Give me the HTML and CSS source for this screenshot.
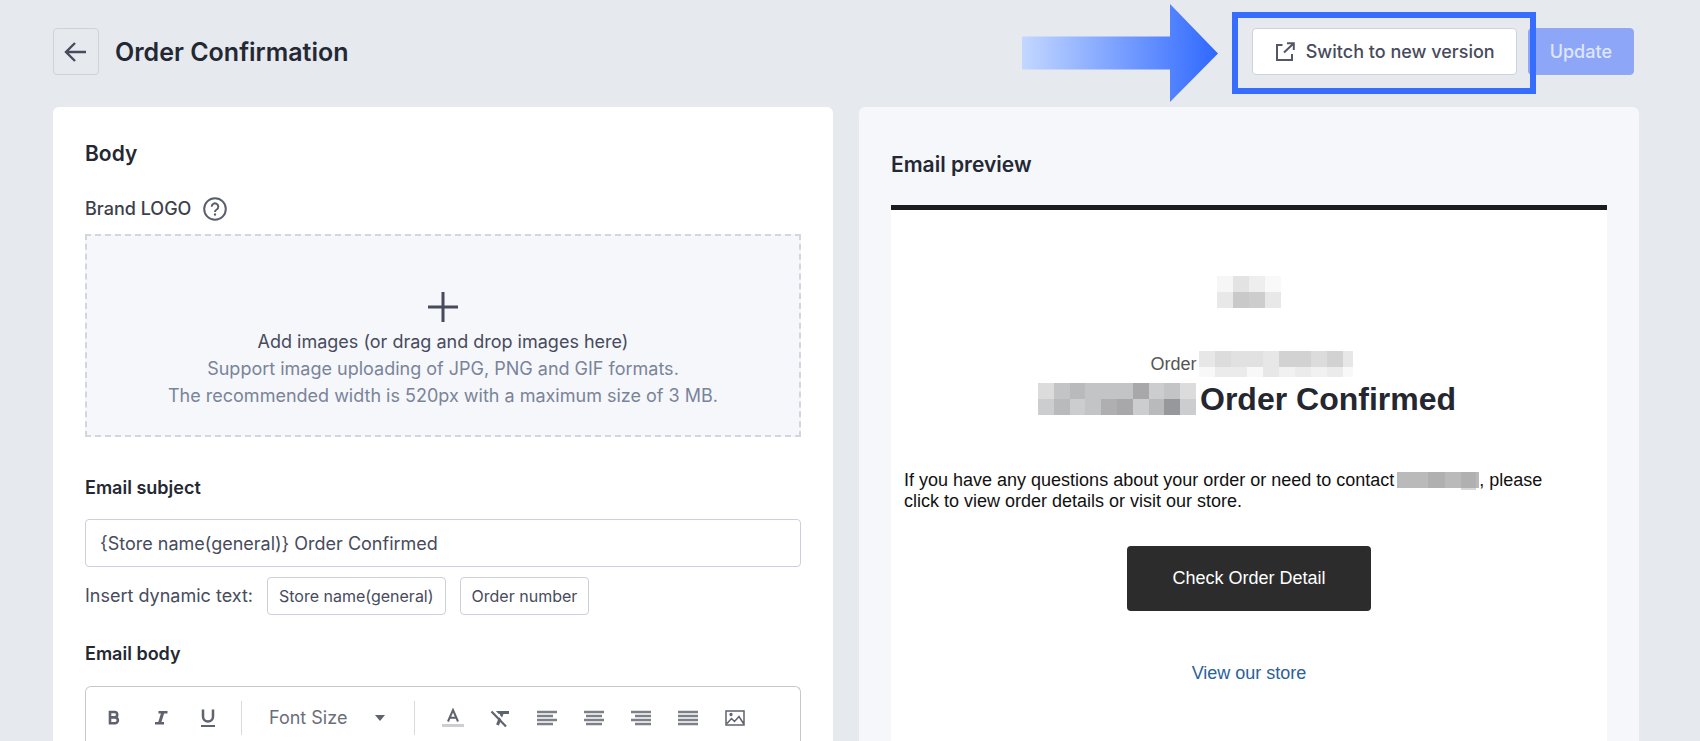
FILE: index.html
```html
<!DOCTYPE html>
<html lang="en">
<head>
<meta charset="utf-8">
<title>Order Confirmation</title>
<link rel="stylesheet" href="styles.css">
</head>
<body>
<header class="topbar">
  <button class="back" type="button" aria-label="Back">
    <svg width="24" height="24" viewBox="0 0 24 24" fill="none" stroke="#474b5c" stroke-width="2.400"><path d="M22 12H2M11 3L2 12l9 9"/></svg>
  </button>
  <h1 class="page-title">Order Confirmation</h1>
  <div class="switch-wrap">
    <svg class="callout-arrow" width="196" height="98" viewBox="0 0 196 98">
      <defs><linearGradient id="arrow-fill"><stop offset="0" stop-color="#c3d7ff"/><stop offset="1" stop-color="#2f68ff"/></linearGradient></defs>
      <path d="M0 32.500H148V0L196 49.500L148 98V65.500H0z" fill="url(#arrow-fill)"/>
    </svg>
    <button class="btn switch" type="button">
      <svg width="22" height="22" viewBox="0 0 22 22" fill="none" stroke="#545866" stroke-width="2"><path d="M8.500 4H3v15h15v-6M10 11.500L19.500 2.500M13 2.200h6.800V9"/></svg>
      Switch to new version
    </button>
    <span class="callout-box"></span>
  </div>
  <button class="btn update" type="button" disabled>Update</button>
</header>
<main class="columns">
  <section class="card editor">
    <h2 class="card-title">Body</h2>
    <div class="logo-label">Brand LOGO
      <svg width="24" height="24" viewBox="0 0 24 24" fill="none" stroke="#5b5f6d" stroke-width="2"><circle cx="12" cy="12" r="10.800"/><path d="M8.700 9.700a3.300 3.300 0 1 1 5 2.800c-1.200.7-1.700 1.200-1.700 2.300v.2"/><circle cx="12" cy="17.500" r=".6" stroke-width="1.200"/></svg>
    </div>
    <button class="dropzone" type="button">
      <svg width="30" height="30" viewBox="0 0 30 30" stroke="#474b5c" stroke-width="3"><path d="M15 0v30M0 15h30"/></svg>
      <span class="drop-main">Add images (or drag and drop images here)</span>
      <span class="drop-hint">Support image uploading of JPG, PNG and GIF formats.</span>
      <span class="drop-hint">The recommended width is 520px with a maximum size of 3 MB.</span>
    </button>
    <label class="field-label" for="subject">Email subject</label>
    <input class="subject" id="subject" type="text" value="{Store name(general)} Order Confirmed">
    <div class="dynamic">
      <span>Insert dynamic text:</span>
      <button class="chip" type="button">Store name(general)</button>
      <button class="chip" type="button">Order number</button>
    </div>
    <h3 class="field-label body-label">Email body</h3>
    <div class="rich">
      <div class="tools">
        <button class="tool" type="button" aria-label="Bold"><svg width="20" height="20" viewBox="0 0 20 20" fill="none" stroke="#5f636e" stroke-width="2.600"><path d="M6 4h4.500a2.700 2.700 0 0 1 0 5.400H6zM6 9.400h5a2.900 2.900 0 0 1 0 5.800H6z"/></svg></button>
        <button class="tool" type="button" aria-label="Italic"><svg width="20" height="20" viewBox="0 0 20 20" fill="none" stroke="#5f636e"><path stroke-width="2.500" d="M7.500 4.200h9M4 15.200h9"/><path stroke-width="3" d="M12 4l-3.500 11"/></svg></button>
        <button class="tool" type="button" aria-label="Underline"><svg width="20" height="20" viewBox="0 0 20 20" fill="none" stroke="#5f636e"><path stroke-width="2.500" d="M5 1.500v7a5 5 0 0 0 10 0v-7"/><path stroke-width="2" d="M3 18h14"/></svg></button>
        <span class="sep"></span>
        <button class="size" type="button">Font Size <svg width="10" height="6" viewBox="0 0 10 6" fill="#5f636e"><path d="M0 0h10L5 6z"/></svg></button>
        <span class="sep"></span>
        <button class="tool" type="button" aria-label="Text color"><svg width="22" height="20" viewBox="0 0 22 20" fill="none"><path stroke="#5f636e" stroke-width="2" d="M6 13.500L11 2l5 11.500M7.800 9.800h6.400"/><path stroke="#cdced1" stroke-width="3" d="M0 17.500h22"/></svg></button>
        <button class="tool" type="button" aria-label="Clear formatting"><svg width="20" height="20" viewBox="0 0 20 20" fill="none" stroke="#5f636e"><path stroke-width="3" d="M6 4.500h13M12.500 4.500L7.500 17"/><path stroke="#fff" stroke-width="2" d="M3 1.500l14.500 15"/><path stroke-width="2.200" d="M1.500 3.500l14.500 15"/></svg></button>
        <button class="tool" type="button" aria-label="Align left"><svg width="20" height="20" viewBox="0 0 20 20" stroke="#7d8089" stroke-width="2.500"><path d="M0 4h20M0 8h16M0 12h20M0 16h16"/></svg></button>
        <button class="tool" type="button" aria-label="Align center"><svg width="20" height="20" viewBox="0 0 20 20" stroke="#7d8089" stroke-width="2.500"><path d="M0 4h20M2 8h16M0 12h20M2 16h16"/></svg></button>
        <button class="tool" type="button" aria-label="Align right"><svg width="20" height="20" viewBox="0 0 20 20" stroke="#7d8089" stroke-width="2.500"><path d="M0 4h20M4 8h16M0 12h20M4 16h16"/></svg></button>
        <button class="tool" type="button" aria-label="Justify"><svg width="20" height="20" viewBox="0 0 20 20" stroke="#7d8089" stroke-width="2.500"><path d="M0 4h20M0 8h20M0 12h20M0 16h20"/></svg></button>
        <button class="tool" type="button" aria-label="Insert image"><svg width="20" height="20" viewBox="0 0 20 20" fill="none" stroke="#5f636e" stroke-width="1.500"><path d="M1 3h18v14H1zM2 15.500l4.500-5 3 3L14 8.500l4.500 7"/><circle cx="6" cy="6.500" r=".9"/></svg></button>
      </div>
    </div>
  </section>
  <section class="card preview">
    <h2 class="card-title">Email preview</h2>
    <article class="mail">
      <svg class="mail-logo" width="64" height="32" viewBox="0 0 4 2" shape-rendering="crispEdges"><path fill="#f6f6f6" d="M0 0h1v1H0z"/><path fill="#e3e3e3" d="M1 0h1v1H1z"/><path fill="#eee" d="M2 0h1v1H2z"/><path fill="#f9f9f9" d="M3 0h1v1H3z"/><path fill="#e8e8e8" d="M0 1h1v1H0zM3 1h1v1H3z"/><path fill="#c9c9c9" d="M1 1h1v1H1z"/><path fill="#cdcdcd" d="M2 1h1v1H2z"/></svg>
      <p class="order-no">Order
        <svg width="154" height="26" viewBox="0 0 154 26" shape-rendering="crispEdges"><path fill="#e7e7e7" d="M0 0h16v16H0zM64 0h16v16H64zM64 16h16v10H64zM144 0h10v16h-10z"/><path fill="#dcdcdc" d="M16 0h16v16H16zM112 0h16v16h-16z"/><path fill="#e1e1e1" d="M32 0h32v16H32z"/><path fill="#d2d2d2" d="M80 0h32v16H80zM128 0h16v16h-16z"/><path fill="#f8f8f8" d="M0 16h16v10H0zM48 16h16v10H48zM144 16h10v10h-10z"/><path fill="#ebebeb" d="M16 16h32v10H16zM96 16h16v10H96zM128 16h16v10h-16z"/><path fill="#f1f1f1" d="M80 16h16v10H80zM112 16h16v10h-16z"/></svg>
      </p>
      <h2 class="mail-title">
        <svg width="158" height="32" viewBox="0 0 10 2" preserveAspectRatio="none" shape-rendering="crispEdges"><path fill="#dcdcdd" d="M0 0h1v1H0zM9 0h1v1H9z"/><path fill="#c3c4c6" d="M1 0h1v1H1zM3 0h3v1H3zM8 0h1v1H8zM3 1h1v1H3z"/><path fill="#b9babc" d="M2 0h1v1H2zM1 1h1v1H1zM7 1h1v1H7z"/><path fill="#a8a8aa" d="M6 0h1v1H6zM5 1h1v1H5z"/><path fill="#cccdcf" d="M7 0h1v1H7zM0 1h1v1H0zM2 1h1v1H2zM6 1h1v1H6zM9 1h1v1H9z"/><path fill="#afafb1" d="M4 1h1v1H4z"/><path fill="#97989c" d="M8 1h1v1H8z"/></svg>
        Order Confirmed
      </h2>
      <p class="mail-text">If you have any questions about your order or need to contact <svg width="82" height="18" viewBox="0 0 82 18" shape-rendering="crispEdges"><path fill="#bababa" d="M0 0h82v16H0z"/><path fill="#b0b0b0" d="M31 0h17v16H31zM64 0h15v16H64z"/><path fill="#d8d8d8" d="M64 16h15v2H64z"/></svg>, please<br>click to view order details or visit our store.</p>
      <a class="mail-button" href="#order">Check Order Detail</a>
      <a class="mail-link" href="#store">View our store</a>
    </article>
  </section>
</main>
</body>
</html>
```
FILE: styles.css
```css
* { box-sizing: border-box; }
html, body { height: 100%; }
body {
  margin: 0;
  display: flex;
  flex-direction: column;
  overflow: hidden;
  background: #e6e9ee;
  color: #474b5c;
  font: 18px/26px Inter, sans-serif;
}
h1, h2, h3, p { margin: 0; }
button, input { font: inherit; color: inherit; }
button { padding: 0; }
svg { flex: none; }

.topbar {
  display: flex;
  align-items: center;
  gap: 16px;
  padding: 28px 66px 32px 53px;
}
.back {
  display: grid;
  place-items: center;
  width: 46px;
  height: 47px;
  border: 1px solid #cdd2de;
  border-radius: 4px;
  background: transparent;
}
.page-title {
  flex: 1;
  color: #242833;
  font-size: 25px;
  line-height: 32px;
  font-weight: 600;
}
.btn {
  display: flex;
  align-items: center;
  justify-content: center;
  height: 47px;
  border-radius: 4px;
  font-weight: 500;
}
.switch-wrap { position: relative; }
.switch {
  gap: 10px;
  padding: 0 21px;
  border: 1px solid #cdd2de;
  background: #fff;
}
.callout-box {
  position: absolute;
  inset: -16px -19px -19px -20px;
  border: 6px solid #366dff;
  pointer-events: none;
}
.callout-arrow {
  position: absolute;
  top: -24px;
  right: calc(100% + 34px);
}
.update {
  margin-left: -5px;
  padding: 0 21px;
  border: 1px solid #94a8f0;
  background: #8ea6f8;
  color: #dfe6fd;
}

.columns {
  flex: 1;
  display: grid;
  grid-template-columns: 1fr 1fr;
  gap: 26px;
  min-height: 0;
  padding: 0 61px 0 53px;
}
.card {
  display: flex;
  flex-direction: column;
  min-width: 0;
  padding: 33px 32px 0;
  border-radius: 6px 6px 0 0;
}
.editor { background: #fff; }
.preview { padding-top: 44px; background: #f5f7fb; }
.card-title {
  color: #242833;
  font-size: 21px;
  line-height: 28px;
  font-weight: 600;
}

.logo-label {
  display: flex;
  align-items: center;
  gap: 12px;
  margin: 28px 0 12px;
  color: #3d404b;
  font-weight: 500;
}
.dropzone {
  display: flex;
  flex-direction: column;
  align-items: center;
  height: 203px;
  padding-top: 56px;
  border: 2px dashed #d2d6e0;
  background: #f5f7fb;
  line-height: 27px;
}
.drop-main { margin-top: 6px; }
.drop-hint { color: #7a8499; }
.field-label {
  margin-top: 38px;
  color: #242833;
  font-size: 18px;
  line-height: 26px;
  font-weight: 600;
}
.subject {
  height: 48px;
  margin-top: 18px;
  padding: 0 14px;
  border: 1px solid #cdd0da;
  border-radius: 4px;
  background: #fff;
}
.dynamic {
  display: flex;
  align-items: center;
  gap: 14px;
  margin-top: 10px;
}
.chip {
  height: 38px;
  padding: 0 11px;
  border: 1px solid #cdd0da;
  border-radius: 4px;
  background: #fff;
  font-size: 16px;
}
.body-label { margin-top: 26px; }
.rich {
  flex: 1;
  margin-top: 19px;
  border: 1px solid #c6c8cc;
  border-bottom: 0;
  border-radius: 6px 6px 0 0;
}
.tools {
  display: flex;
  align-items: center;
  padding: 14px 4px;
}
.tool {
  display: grid;
  place-items: center;
  width: 47px;
  height: 34px;
  border: 0;
  background: none;
}
.sep { width: 1px; height: 34px; margin: 0 14px 0 10px; background: #d9dadd; }
.size {
  display: flex;
  align-items: center;
  gap: 28px;
  padding: 0 19px 0 13px;
  border: 0;
  background: none;
  color: #6b6e78;
}

.mail {
  flex: 1;
  display: flex;
  flex-direction: column;
  align-items: center;
  margin-top: 26px;
  padding: 66px 13px 0;
  border-top: 5px solid #1b1c1e;
  background: #fff;
  color: #111;
  font-family: "Liberation Sans", Arial, sans-serif;
  line-height: 21px;
}
.order-no {
  display: flex;
  align-items: center;
  gap: 2px;
  margin-top: 43px;
  padding-left: 5px;
  color: #555;
}
.mail-title {
  display: flex;
  align-items: center;
  gap: 4px;
  margin-top: 6px;
  padding-right: 4px;
  color: #242630;
  font-size: 32px;
  line-height: 32px;
}
.mail-text { align-self: stretch; margin-top: 55px; }
.mail-text svg { vertical-align: -4px; margin-left: -2px; }
.mail-button {
  margin-top: 34px;
  padding: 22px 45px;
  border-radius: 4px;
  background: #2c2c2c;
  color: #fff;
  text-decoration: none;
}
.mail-link { margin-top: 52px; color: #2b6198; text-decoration: none; }
```
